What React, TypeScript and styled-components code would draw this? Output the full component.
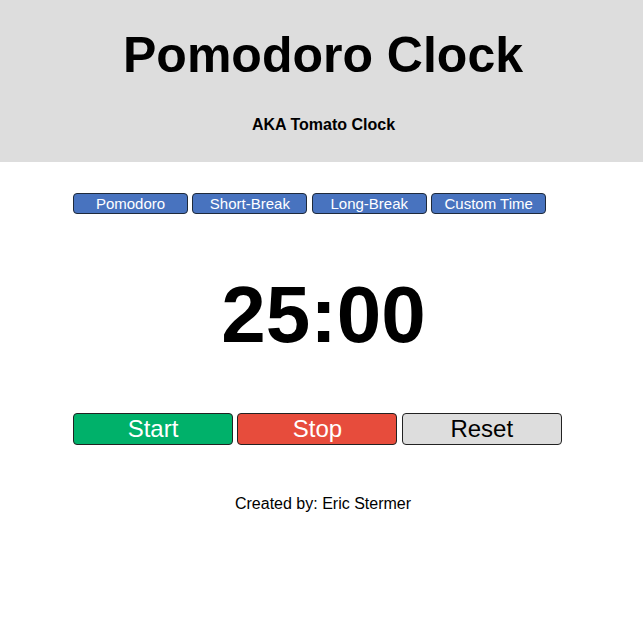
import React from "react";
import styled, { createGlobalStyle } from "styled-components";

const GlobalStyle = createGlobalStyle`
  html, body {
    margin: 0;
    padding: 0;
    background: #ffffff;
    font-family: "Liberation Sans", Arial, sans-serif;
    color: #000000;
  }
`;

const Header = styled.header`
  background: #dddddd;
  padding: 26px 0 28px 3px;
  text-align: center;
`;

const Title = styled.h1`
  margin: 0;
  font-size: 50px;
  line-height: 58px;
  font-weight: 700;
`;

const Subtitle = styled.h3`
  margin: 32px 0 0;
  font-size: 16px;
  line-height: 18px;
  font-weight: 700;
  padding-left: 1px;
`;

const Main = styled.main`
  width: 497px;
  margin: 0 auto;
`;

const TabRow = styled.div`
  display: flex;
  gap: 4.4px;
  margin-top: 31px;
`;

const Tab = styled.button`
  box-sizing: border-box;
  width: 115px;
  height: 21px;
  padding: 0;
  border: 1px solid #1f2a3a;
  border-radius: 4px;
  background: #4873bf;
  color: #ffffff;
  font-family: "Liberation Sans", Arial, sans-serif;
  font-size: 15px;
  line-height: 19px;
  cursor: pointer;
`;

const Timer = styled.div`
  margin-top: 55px;
  text-align: center;
  font-size: 80px;
  line-height: 92px;
  font-weight: 700;
  padding-left: 4px;
`;

const ControlRow = styled.div`
  display: flex;
  gap: 4.4px;
  margin-top: 52px;
`;

const Control = styled.button<{ $bg: string; $fg: string }>`
  box-sizing: border-box;
  width: 160px;
  height: 32px;
  padding: 0;
  border: 1px solid #222222;
  border-radius: 4px;
  background: ${(p) => p.$bg};
  color: ${(p) => p.$fg};
  font-family: "Liberation Sans", Arial, sans-serif;
  font-size: 24px;
  line-height: 30px;
  cursor: pointer;
`;

const Footer = styled.footer`
  margin-top: 50px;
  text-align: center;
  font-size: 16px;
  line-height: 18px;
  padding-left: 3px;
`;

export default function App() {
  return (
    <>
      <GlobalStyle />
      <Header>
        <Title>Pomodoro Clock</Title>
        <Subtitle>AKA Tomato Clock</Subtitle>
      </Header>
      <Main>
        <TabRow>
          <Tab>Pomodoro</Tab>
          <Tab>Short-Break</Tab>
          <Tab>Long-Break</Tab>
          <Tab>Custom Time</Tab>
        </TabRow>
        <Timer>25:00</Timer>
        <ControlRow>
          <Control $bg="#00b16a" $fg="#ffffff">Start</Control>
          <Control $bg="#e74c3c" $fg="#ffffff">Stop</Control>
          <Control $bg="#dddddd" $fg="#000000">Reset</Control>
        </ControlRow>
      </Main>
      <Footer>Created by: Eric Stermer</Footer>
    </>
  );
}
